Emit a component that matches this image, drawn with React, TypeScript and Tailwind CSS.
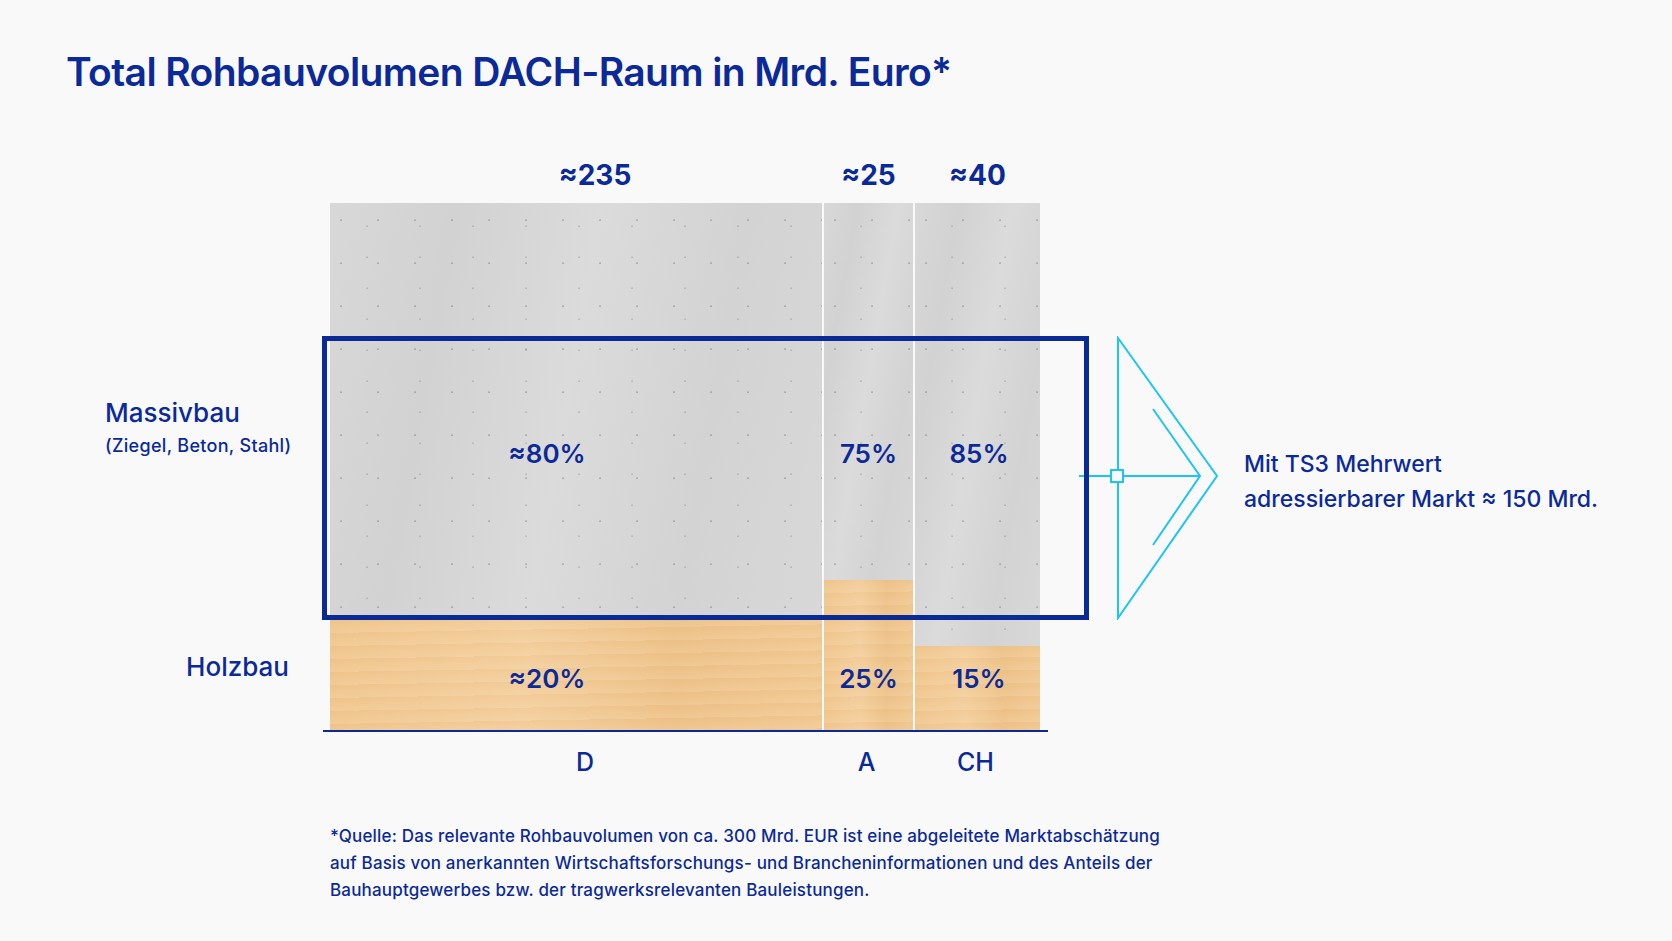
const concrete =
  "bg-[radial-gradient(circle_at_30%_40%,rgba(90,90,90,0.35)_0.6px,transparent_1.3px),radial-gradient(circle_at_70%_75%,rgba(90,90,90,0.25)_0.6px,transparent_1.2px),linear-gradient(100deg,#d9d8d8,#d3d2d2_22%,#dcdbdb_48%,#d4d3d3_74%,#d9d8d8)] bg-size-[37px_43px,53px_31px,100%_100%]";
const wood =
  "bg-[repeating-linear-gradient(179deg,rgba(200,130,60,0.07)_0px,rgba(200,130,60,0)_7px,rgba(255,255,255,0.06)_13px),linear-gradient(90deg,#f1c891,#f4d09f_40%,#eec48c_70%,#f2ca95)]";

const columns = [
  { id: "D", total: "≈235", massiv: "≈80%", holz: "≈20%", w: "w-[492px]", wood: "h-[110px]", shift: "pr-[58px]", top: "pl-[38px]", bottom: "pl-[18px]" },
  { id: "A", total: "≈25", massiv: "75%", holz: "25%", w: "w-[89px]", wood: "h-[150px]", shift: "", top: "", bottom: "pr-[4px]" },
  { id: "CH", total: "≈40", massiv: "85%", holz: "15%", w: "w-[125px]", wood: "h-[84px]", shift: "pl-[3px]", top: "", bottom: "pr-[4px]" },
];

function Arrow() {
  return (
    <svg width="141" height="284" viewBox="0 0 141 284" className="shrink-0 ml-[39px] mt-[186px]">
      <g fill="none" stroke="#1dc5f2" strokeWidth="2">
        <path d="M39 2 L138 140 L39 282 Z" />
        <path d="M74 73 L121 140 L74 209" />
        <path d="M0 140 H121" />
        <rect x="32" y="134" width="12" height="12" fill="#f9f9f9" />
      </g>
    </svg>
  );
}

export default function App() {
  return (
    <div className="w-[1672px] h-[941px] overflow-hidden bg-[#f9f9f9] text-[#0b2a98] font-['Inter','Noto_Sans',sans-serif]">
      <h1 className="pl-[66px] pt-[49px] text-[39px] leading-[46px] font-semibold tracking-[-0.6px]">
        Total Rohbauvolumen DACH-Raum in Mrd. Euro*
      </h1>

      <div className="flex items-start mt-[55px]">
        <div className="w-[330px] shrink-0 pt-[247px] pl-[105px]">
          <div className="text-[26px] leading-[32px] font-medium">Massivbau</div>
          <div className="mt-[5px] text-[18px] leading-[24px] font-medium tracking-[0.3px]">(Ziegel, Beton, Stahl)</div>
          <div className="mt-[193px] pr-[41px] text-right text-[26px] leading-[32px] font-medium">Holzbau</div>
        </div>

        <div className="relative w-[710px] shrink-0">
          <div className="flex gap-[2px] h-[50px]">
            {columns.map((c) => (
              <div key={c.id} className={`${c.w} ${c.top} flex items-center justify-center text-[28px] font-bold`}>
                {c.total}
              </div>
            ))}
          </div>

          <div className="flex gap-[2px] mt-[3px] h-[527px]">
            {columns.map((c) => (
              <div key={c.id} className={`${c.w} flex flex-col`}>
                <div className={`flex-1 ${concrete} pt-[235px] ${c.shift} text-center text-[26px] leading-[32px] font-semibold`}>
                  {c.massiv}
                </div>
                <div className={`${c.wood} ${wood} flex flex-col justify-end pb-[35px] ${c.shift} text-center text-[26px] leading-[32px] font-semibold`}>
                  {c.holz}
                </div>
              </div>
            ))}
          </div>

          <div className="-ml-[7px] w-[725px] h-[2px] bg-[#0b2a98]" />

          <div className="flex gap-[2px] h-[58px] pt-[4px]">
            {columns.map((c) => (
              <div key={c.id} className={`${c.w} ${c.bottom} flex items-center justify-center text-[25px] font-medium`}>
                {c.id}
              </div>
            ))}
          </div>

          <div className="absolute left-[-8px] top-[186px] w-[767px] h-[284px] border-[5px] border-[#0a2a96]" />
        </div>

        <Arrow />

        <div className="ml-[24px] mt-[297px] text-[23px] leading-[35px] font-medium whitespace-nowrap">
          <div>Mit TS3 Mehrwert</div>
          <div>adressierbarer Markt ≈ 150 Mrd.</div>
        </div>
      </div>

      <p className="pl-[330px] mt-[33px] text-[17px] leading-[27px] font-medium tracking-[0.18px]">
        *Quelle: Das relevante Rohbauvolumen von ca. 300 Mrd. EUR ist eine abgeleitete Marktabschätzung
        <br />
        auf Basis von anerkannten Wirtschaftsforschungs- und Brancheninformationen und des Anteils der
        <br />
        Bauhauptgewerbes bzw. der tragwerksrelevanten Bauleistungen.
      </p>
    </div>
  );
}
